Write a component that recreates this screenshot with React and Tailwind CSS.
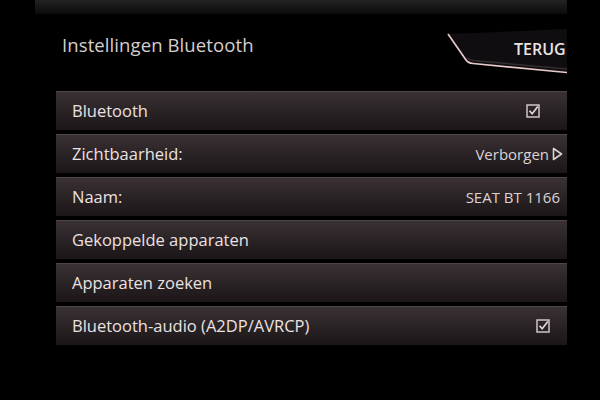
import React from "react";

function CheckBox() {
  return (
    <svg width="14" height="14" viewBox="0 0 14 14" className="shrink-0">
      <rect x="1" y="1" width="12" height="12" fill="none" stroke="#cfc5c7" strokeWidth="1.5" />
      <path d="M3.5 6.8 L6.2 9.8 L11.8 2.6" fill="none" stroke="#e2d8da" strokeWidth="1.7" />
    </svg>
  );
}

function Arrow() {
  return (
    <svg width="11" height="14" viewBox="0 0 11 14" className="shrink-0">
      <path d="M1.5 1.5 L9.5 7 L1.5 12.5 Z" fill="none" stroke="#ddd3d5" strokeWidth="1.6" strokeLinejoin="round" />
    </svg>
  );
}

const rows = [
  { label: "Bluetooth", right: <CheckBox />, pr: "pr-[27px]" },
  {
    label: "Zichtbaarheid:",
    right: (
      <span className="flex items-center gap-[3px]">
        <span>Verborgen</span>
        <Arrow />
      </span>
    ),
    pr: "pr-[4px]",
  },
  { label: "Naam:", right: <span>SEAT BT 1166</span>, pr: "pr-[7px]" },
  { label: "Gekoppelde apparaten", pr: "pr-[7px]" },
  { label: "Apparaten zoeken", pr: "pr-[7px]" },
  { label: "Bluetooth-audio (A2DP/AVRCP)", right: <CheckBox />, pr: "pr-[17px]" },
];

export default function App() {
  return (
    <div className="w-[600px] h-[400px] bg-black flex overflow-hidden font-['Open_Sans',sans-serif]">
      <div className="w-[567px] h-full flex flex-col overflow-hidden">
        {/* faint top glare */}
        <div className="h-[14px] ml-[35px] shrink-0 bg-gradient-to-b from-[#232323] to-[#0b0b0b]" />

        {/* header */}
        <div className="h-[77px] shrink-0 flex justify-between">
          <h1 className="pl-[62px] pt-[19px] text-[18.5px] leading-[24px] text-[#d6cecf] tracking-[0.1px]">
            Instellingen Bluetooth
          </h1>
          <div className="relative w-[122px] h-full">
            <svg width="122" height="77" viewBox="0 0 122 77" className="absolute left-0 top-0">
              <path d="M3 20 L21 46 Q23 49 28 49.5 L122 58 L122 15 Z" fill="#0f0d0f" />
              <path d="M22 44 Q24 46 28 46.5 L122 55" fill="none" stroke="#332d2f" strokeWidth="1.5" />
              <path d="M3 20 L21 46 Q23 49 28 49.5 L122 58.5" fill="none" stroke="#e7c9c9" strokeWidth="1.7" />
            </svg>
            <span className="absolute left-[69px] top-[25px] text-[16px] leading-[20px] font-semibold text-[#ebe3e3]">
              TERUG
            </span>
          </div>
        </div>

        {/* list */}
        <div className="pl-[56px] flex flex-col gap-[4px]">
          {rows.map((r) => (
            <div
              key={r.label}
              className={`h-[39px] flex items-center justify-between pl-[16px] ${r.pr} border-t border-[#4e4547] bg-gradient-to-b from-[#3a3133] via-[#2a2325] to-[#1c1618] text-[16.5px] font-medium text-[#ebe1e2]`}
            >
              <span>{r.label}</span>
              {r.right ? <span className="text-[15px] font-normal text-[#dcd2d4]">{r.right}</span> : null}
            </div>
          ))}
        </div>
      </div>
      <div className="flex-1 bg-black" />
    </div>
  );
}
